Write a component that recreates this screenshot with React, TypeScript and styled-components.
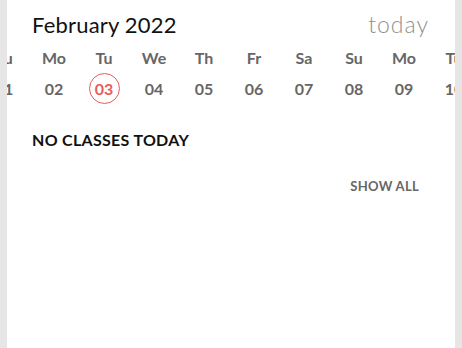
import React from "react";
import styled, { createGlobalStyle } from "styled-components";

const GlobalStyle = createGlobalStyle`
  html, body {
    margin: 0;
    padding: 0;
    background: #e6e6e6;
    font-family: Lato, "Noto Sans", sans-serif;
  }
`;

const days = [
  { label: "Su", date: "01" },
  { label: "Mo", date: "02" },
  { label: "Tu", date: "03", today: true },
  { label: "We", date: "04" },
  { label: "Th", date: "05" },
  { label: "Fr", date: "06" },
  { label: "Sa", date: "07" },
  { label: "Su", date: "08" },
  { label: "Mo", date: "09" },
  { label: "Tu", date: "10" },
];

const App = () => {
  return (
    <>
      <GlobalStyle />
      <Panel>
        <Header>
          <Month>February 2022</Month>
          <TodayLink>today</TodayLink>
        </Header>

        <Strip>
          {days.map((d, i) => (
            <DayCell key={i}>
              <DayLabel>{d.label}</DayLabel>
              <DateNum $today={d.today}>{d.date}</DateNum>
            </DayCell>
          ))}
        </Strip>

        <Empty>NO CLASSES TODAY</Empty>
        <Footer>
          <ShowAll>SHOW ALL</ShowAll>
        </Footer>
      </Panel>
    </>
  );
};

export default App;

const Panel = styled.div`
  margin: 0 7px;
  height: 348px;
  background: #fff;
  overflow: hidden;
`;

const Header = styled.div`
  display: flex;
  justify-content: space-between;
  align-items: baseline;
  padding: 10px 26px 0 25px;
`;

const Month = styled.div`
  font-size: 22px;
  color: #111;
  letter-spacing: 0.2px;
`;

const TodayLink = styled.div`
  font-size: 23px;
  font-weight: 300;
  color: #8f8f8f;
  letter-spacing: 1px;
`;

const Strip = styled.div`
  display: flex;
  margin-left: -28px;
  margin-top: 10px;
`;

const DayCell = styled.div`
  flex: 0 0 50px;
  display: flex;
  flex-direction: column;
  align-items: center;
`;

const DayLabel = styled.div`
  font-size: 16px;
  font-weight: 700;
  color: #666;
  line-height: 20px;
`;

const DateNum = styled.div<{ $today?: boolean }>`
  margin-top: 5px;
  width: 31px;
  height: 31px;
  box-sizing: border-box;
  display: flex;
  align-items: center;
  justify-content: center;
  border-radius: 50%;
  border: 1.5px solid ${(p) => (p.$today ? "#e95b5b" : "transparent")};
  color: ${(p) => (p.$today ? "#e95b5b" : "#666")};
  font-size: 16px;
  font-weight: 700;
`;

const Empty = styled.div`
  margin: 26px 0 0 25px;
  font-size: 16px;
  font-weight: 700;
  color: #111;
  letter-spacing: 0.3px;
`;

const Footer = styled.div`
  display: flex;
  justify-content: flex-end;
  padding: 29px 36px 0 0;
`;

const ShowAll = styled.div`
  font-size: 13px;
  font-weight: 700;
  color: #666;
  letter-spacing: 0.3px;
`;
